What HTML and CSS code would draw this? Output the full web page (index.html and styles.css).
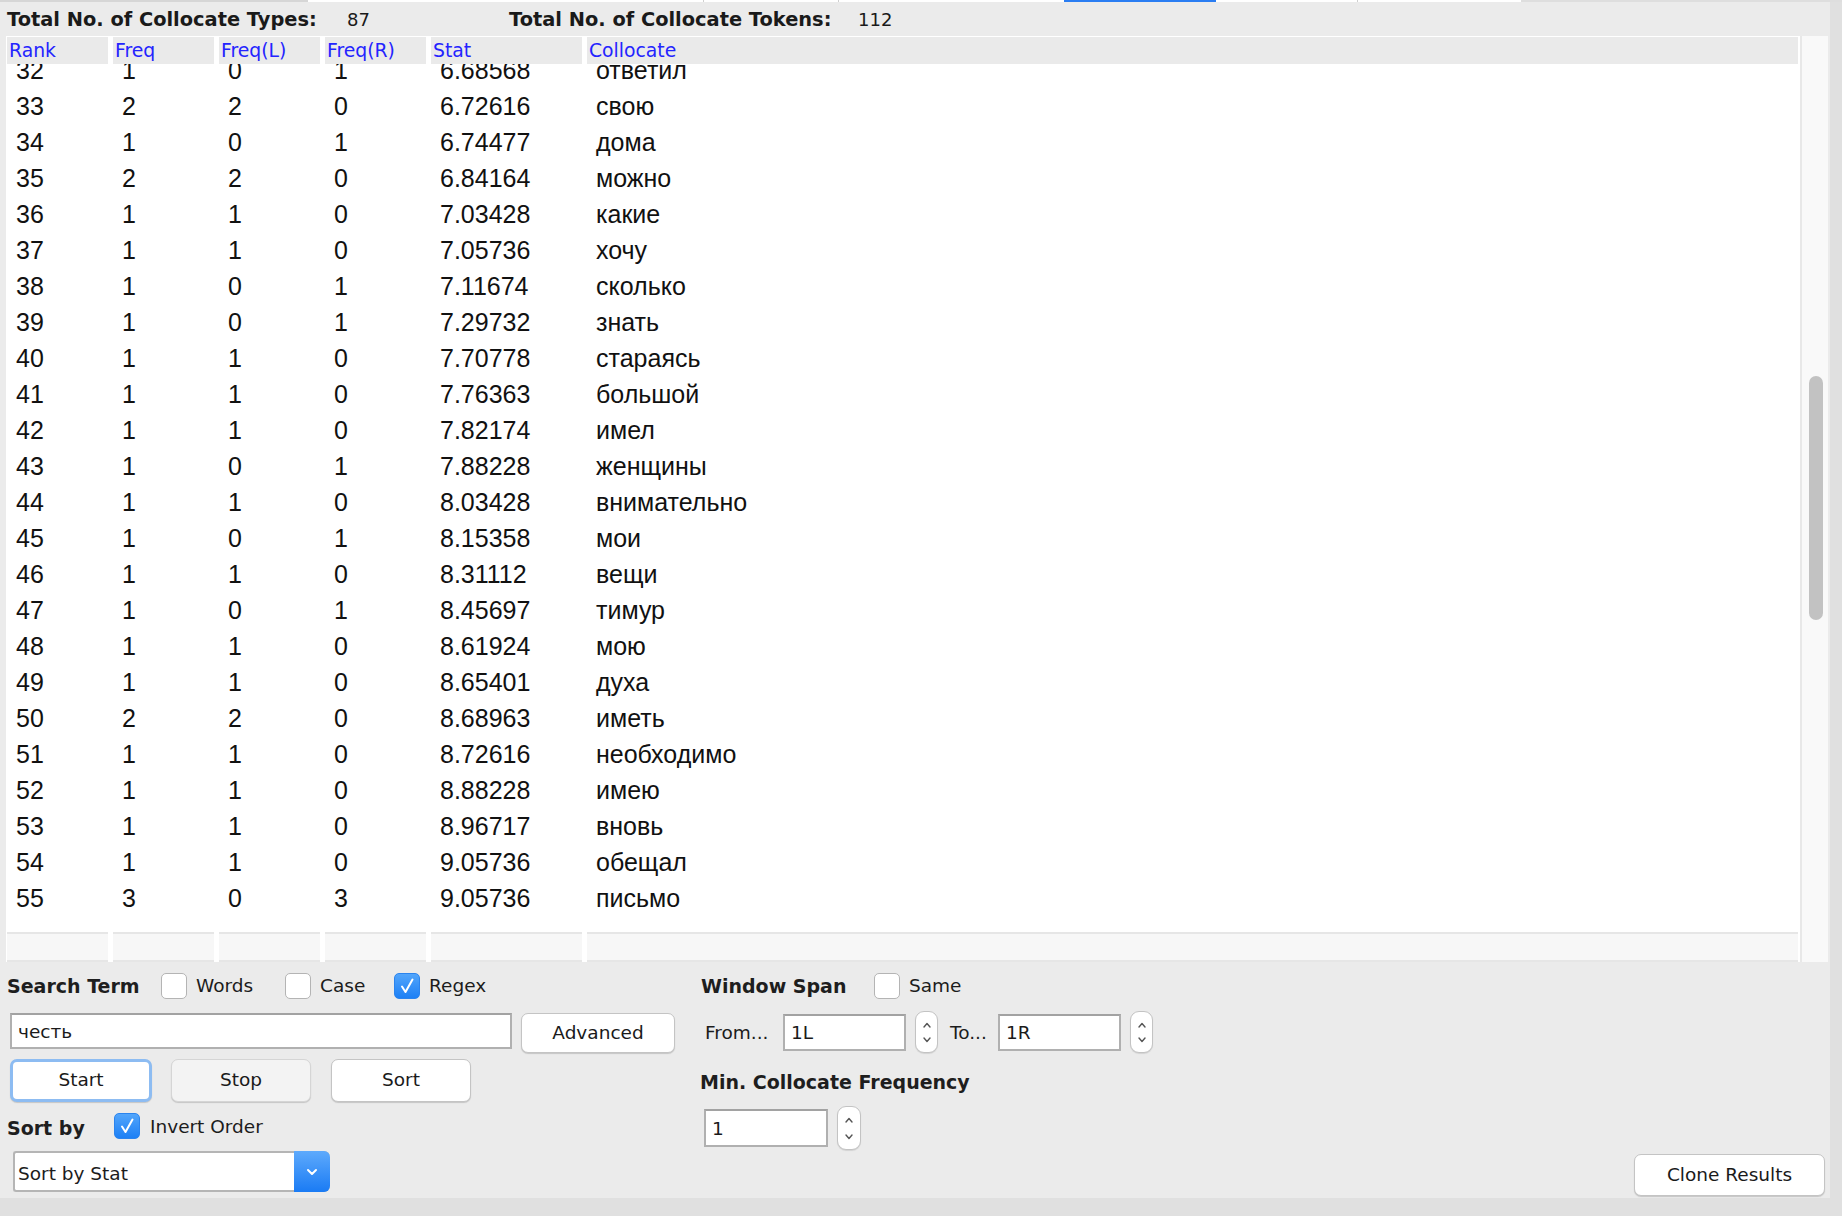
FILE: index.html
```html
<!DOCTYPE html>
<html>
<head>
<meta charset="utf-8">
<title>Collocates</title>
<link rel="stylesheet" href="styles.css">
</head>
<body>
<div class="tabstrip">
  <span class="ts ts-grey1"></span>
  <span class="ts ts-white1"></span>
  <span class="ts ts-sep"></span>
  <span class="ts ts-white2"></span>
  <span class="ts ts-sep"></span>
  <span class="ts ts-white3"></span>
  <span class="ts ts-blue"></span>
  <span class="ts ts-white4"></span>
  <span class="ts ts-sep"></span>
  <span class="ts ts-white5"></span>
  <span class="ts ts-grey2"></span>
</div>
<div class="window">
  <div class="main">
    <div class="totals">
      <span class="tot-label tl1">Total No. of Collocate Types:</span>
      <span class="tot-val tv1">87</span>
      <span class="tot-label tl2">Total No. of Collocate Tokens:</span>
      <span class="tot-val">112</span>
    </div>

    <div class="tablepane">
      <div class="table">
        <div class="thead">
          <div class="th">Rank</div>
          <div class="th">Freq</div>
          <div class="th">Freq(L)</div>
          <div class="th">Freq(R)</div>
          <div class="th">Stat</div>
          <div class="th">Collocate</div>
        </div>
        <div class="viewport">
          <div class="rows">
            <div class="row"><span>32</span><span>1</span><span>0</span><span>1</span><span>6.68568</span><span>ответил</span></div>
            <div class="row"><span>33</span><span>2</span><span>2</span><span>0</span><span>6.72616</span><span>свою</span></div>
            <div class="row"><span>34</span><span>1</span><span>0</span><span>1</span><span>6.74477</span><span>дома</span></div>
            <div class="row"><span>35</span><span>2</span><span>2</span><span>0</span><span>6.84164</span><span>можно</span></div>
            <div class="row"><span>36</span><span>1</span><span>1</span><span>0</span><span>7.03428</span><span>какие</span></div>
            <div class="row"><span>37</span><span>1</span><span>1</span><span>0</span><span>7.05736</span><span>хочу</span></div>
            <div class="row"><span>38</span><span>1</span><span>0</span><span>1</span><span>7.11674</span><span>сколько</span></div>
            <div class="row"><span>39</span><span>1</span><span>0</span><span>1</span><span>7.29732</span><span>знать</span></div>
            <div class="row"><span>40</span><span>1</span><span>1</span><span>0</span><span>7.70778</span><span>стараясь</span></div>
            <div class="row"><span>41</span><span>1</span><span>1</span><span>0</span><span>7.76363</span><span>большой</span></div>
            <div class="row"><span>42</span><span>1</span><span>1</span><span>0</span><span>7.82174</span><span>имел</span></div>
            <div class="row"><span>43</span><span>1</span><span>0</span><span>1</span><span>7.88228</span><span>женщины</span></div>
            <div class="row"><span>44</span><span>1</span><span>1</span><span>0</span><span>8.03428</span><span>внимательно</span></div>
            <div class="row"><span>45</span><span>1</span><span>0</span><span>1</span><span>8.15358</span><span>мои</span></div>
            <div class="row"><span>46</span><span>1</span><span>1</span><span>0</span><span>8.31112</span><span>вещи</span></div>
            <div class="row"><span>47</span><span>1</span><span>0</span><span>1</span><span>8.45697</span><span>тимур</span></div>
            <div class="row"><span>48</span><span>1</span><span>1</span><span>0</span><span>8.61924</span><span>мою</span></div>
            <div class="row"><span>49</span><span>1</span><span>1</span><span>0</span><span>8.65401</span><span>духа</span></div>
            <div class="row"><span>50</span><span>2</span><span>2</span><span>0</span><span>8.68963</span><span>иметь</span></div>
            <div class="row"><span>51</span><span>1</span><span>1</span><span>0</span><span>8.72616</span><span>необходимо</span></div>
            <div class="row"><span>52</span><span>1</span><span>1</span><span>0</span><span>8.88228</span><span>имею</span></div>
            <div class="row"><span>53</span><span>1</span><span>1</span><span>0</span><span>8.96717</span><span>вновь</span></div>
            <div class="row"><span>54</span><span>1</span><span>1</span><span>0</span><span>9.05736</span><span>обещал</span></div>
            <div class="row"><span>55</span><span>3</span><span>0</span><span>3</span><span>9.05736</span><span>письмо</span></div>
            <div class="row"><span>56</span><span>1</span><span>0</span><span>1</span><span>9.05736</span><span>прошу</span></div>
          </div>
        </div>
        <div class="gap"></div>
        <div class="tfoot">
          <div class="tf"></div><div class="tf"></div><div class="tf"></div><div class="tf"></div><div class="tf"></div><div class="tf"></div>
        </div>
      </div>
      <div class="vdivider"></div>
      <div class="scrolltrack"><div class="thumb"></div></div>
    </div>

    <div class="controls">
      <div class="col-left">
        <div class="r1">
          <span class="lbl-bold search-lbl">Search Term</span>
          <span class="check w-words"><span class="cb"></span><span>Words</span></span>
          <span class="check w-case"><span class="cb"></span><span>Case</span></span>
          <span class="check"><span class="cb on"><svg viewBox="0 0 26 26" width="26" height="26"><path d="M8 13.5 L11.5 19 L18.5 6.5" fill="none" stroke="#fff" stroke-width="2" stroke-linecap="round" stroke-linejoin="round"/></svg></span><span>Regex</span></span>
        </div>
        <div class="r2">
          <div class="field search-field">честь</div>
          <div class="btn adv-btn">Advanced</div>
        </div>
        <div class="r3">
          <div class="btn focus start-btn">Start</div>
          <div class="btn dim stop-btn">Stop</div>
          <div class="btn sort-btn">Sort</div>
        </div>
        <div class="r4">
          <span class="lbl-bold sortby-lbl">Sort by</span>
          <span class="check"><span class="cb on"><svg viewBox="0 0 26 26" width="26" height="26"><path d="M8 13.5 L11.5 19 L18.5 6.5" fill="none" stroke="#fff" stroke-width="2" stroke-linecap="round" stroke-linejoin="round"/></svg></span><span>Invert Order</span></span>
        </div>
        <div class="r5">
          <div class="combo">
            <span class="combo-text">Sort by Stat</span>
            <span class="combo-btn"><svg viewBox="0 0 14 10" width="14" height="10"><path d="M3 3 L7 7 L11 3" fill="none" stroke="#fff" stroke-width="2" stroke-linecap="round" stroke-linejoin="round"/></svg></span>
          </div>
        </div>
      </div>

      <div class="col-mid">
        <div class="m1">
          <span class="lbl-bold ws-lbl">Window Span</span>
          <span class="check"><span class="cb"></span><span>Same</span></span>
        </div>
        <div class="m2">
          <span class="from-lbl">From...</span>
          <div class="field span-field">1L</div>
          <div class="spin">
            <svg viewBox="0 0 10 6" width="10" height="6"><path d="M2 5 L5 1.5 L8 5" fill="none" stroke="#555" stroke-width="1.4" stroke-linecap="round" stroke-linejoin="round"/></svg>
            <svg viewBox="0 0 10 6" width="10" height="6"><path d="M2 1 L5 4.5 L8 1" fill="none" stroke="#555" stroke-width="1.4" stroke-linecap="round" stroke-linejoin="round"/></svg>
          </div>
          <span class="to-lbl">To...</span>
          <div class="field span-field">1R</div>
          <div class="spin">
            <svg viewBox="0 0 10 6" width="10" height="6"><path d="M2 5 L5 1.5 L8 5" fill="none" stroke="#555" stroke-width="1.4" stroke-linecap="round" stroke-linejoin="round"/></svg>
            <svg viewBox="0 0 10 6" width="10" height="6"><path d="M2 1 L5 4.5 L8 1" fill="none" stroke="#555" stroke-width="1.4" stroke-linecap="round" stroke-linejoin="round"/></svg>
          </div>
        </div>
        <div class="m3"><span class="lbl-bold">Min. Collocate Frequency</span></div>
        <div class="m4">
          <div class="field freq-field">1</div>
          <div class="spin spin-tall">
            <svg viewBox="0 0 10 6" width="10" height="6"><path d="M2 5 L5 1.5 L8 5" fill="none" stroke="#555" stroke-width="1.4" stroke-linecap="round" stroke-linejoin="round"/></svg>
            <svg viewBox="0 0 10 6" width="10" height="6"><path d="M2 1 L5 4.5 L8 1" fill="none" stroke="#555" stroke-width="1.4" stroke-linecap="round" stroke-linejoin="round"/></svg>
          </div>
        </div>
      </div>

      <div class="col-right">
        <div class="btn clone-btn">Clone Results</div>
      </div>
    </div>
  </div>
</div>
</body>
</html>
```
FILE: styles.css
```css
html, body {
  margin: 0;
  padding: 0;
}
body {
  width: 1842px;
  height: 1216px;
  overflow: hidden;
  background: #e0e0e0;
  font-family: "DejaVu Sans", "Noto Sans", sans-serif;
  color: #1c1c1c;
}

/* top tab remnant strip */
.tabstrip {
  display: flex;
  height: 2px;
}
.ts { display: block; height: 2px; }
.ts-grey1 { width: 308px; background: #d6d6d6; }
.ts-white1 { width: 395px; background: #fff; }
.ts-sep { width: 1px; background: #cfcfcf; }
.ts-white2 { width: 134px; background: #fff; }
.ts-white3 { width: 225px; background: #fff; }
.ts-blue { width: 152px; background: #2a7df2; }
.ts-white4 { width: 141px; background: #fff; }
.ts-white5 { width: 163px; background: #fff; }
.ts-grey2 { flex: 1; background: #dedede; }

.window {
  display: flex;
}
.main {
  width: 1830px;
  height: 1196px;
  background: #ebebeb;
  display: flex;
  flex-direction: column;
}

/* totals line */
.totals {
  height: 34px;
  display: flex;
  align-items: center;
  padding-left: 7px;
  font-size: 18px;
  color: #1a1a1a;
}
.tot-label {
  font-weight: bold;
  font-size: 19.4px;
}
.tl1 { width: 340px; }
.tv1 { width: 162px; }
.tl2 { width: 349px; }

/* table */
.tablepane {
  display: flex;
  margin-left: 6px;
  width: 1822px;
  height: 926px;
}
.table {
  width: 1794px;
  background: #fff;
  display: flex;
  flex-direction: column;
}
.thead, .row, .tfoot {
  display: grid;
  grid-template-columns: 106px 106px 106px 106px 156px 1fr;
  padding-left: 1px;
}
.thead {
  margin-top: 1px;
  height: 27px;
}
.th {
  background: #eaeaea;
  margin-right: 5px;
  color: #2424ff;
  font-size: 18.8px;
  line-height: 27px;
  padding-left: 2px;
}
.th:last-child { margin-right: 2px; }

.viewport {
  height: 860px;
  overflow: hidden;
}
.rows {
  margin-top: -12px;
}
.row {
  height: 36px;
  line-height: 36px;
  font-family: "Liberation Sans", Arial, sans-serif;
  font-size: 25px;
  color: #111;
}
.row span {
  padding-left: 9px;
  white-space: nowrap;
}
.gap { height: 8px; }
.tfoot { height: 30px; }
.tf {
  background: #f7f7f7;
  border-top: 2px solid #e6e6e6;
  border-bottom: 2px solid #e6e6e6;
  margin-right: 5px;
}
.tf:last-child { margin-right: 2px; }

.vdivider {
  width: 2px;
  background: #e8e8e8;
}
.scrolltrack {
  width: 26px;
  background: #f9f9f9;
}
.thumb {
  margin-top: 340px;
  margin-left: 7px;
  width: 14px;
  height: 244px;
  border-radius: 7px;
  background: #c2c2c2;
}

/* controls */
.controls {
  display: flex;
  height: 236px;
  font-size: 18.5px;
}
.col-left {
  width: 693px;
  padding-left: 7px;
  display: flex;
  flex-direction: column;
}
.col-mid {
  width: 560px;
  display: flex;
  flex-direction: column;
}
.col-right {
  flex: 1;
  display: flex;
  align-items: flex-end;
  justify-content: flex-end;
  padding: 0 5px 2px 0;
}

.lbl-bold {
  font-weight: bold;
  font-size: 19px;
  color: #1e1e1e;
  white-space: nowrap;
}
.check {
  display: flex;
  align-items: center;
  gap: 9px;
  white-space: nowrap;
}
.cb {
  display: block;
  width: 26px;
  height: 26px;
  box-sizing: border-box;
  border: 1px solid #b4b4b4;
  border-radius: 5px;
  background: #fff;
}
.cb svg { display: block; margin: -1px; }
.cb.on {
  background: linear-gradient(#52a5fb, #1d80f5);
  border-color: #2b84ee;
}

.r1 {
  margin-top: 10px;
  height: 27px;
  display: flex;
  align-items: center;
}
.search-lbl { width: 154px; }
.w-words { width: 124px; }
.w-case { width: 109px; }

.r2 {
  margin-top: 14px;
  height: 40px;
  display: flex;
  align-items: flex-start;
}
.field {
  box-sizing: border-box;
  background: #fff;
  border: 2px solid #b0b0b0;
  border-top-color: #a2a2a2;
  display: flex;
  align-items: center;
  padding-left: 6px;
  font-size: 18.5px;
  color: #1a1a1a;
}
.search-field {
  margin-left: 3px;
  width: 502px;
  height: 36px;
}
.btn {
  box-sizing: border-box;
  background: #fff;
  border: 1px solid #c4c4c4;
  border-radius: 7px;
  box-shadow: 0 1px 1px rgba(0, 0, 0, 0.16);
  display: flex;
  align-items: center;
  justify-content: center;
  color: #1a1a1a;
  font-size: 18.5px;
  padding-bottom: 2px;
}
.btn.focus {
  border: 3px solid #8dbcf2;
}
.btn.dim {
  background: #f3f3f3;
  border-color: #d5d5d5;
}
.adv-btn {
  margin-left: 9px;
  width: 154px;
  height: 40px;
}

.r3 {
  margin-top: 6px;
  height: 43px;
  display: flex;
}
.start-btn { margin-left: 3px; width: 142px; height: 43px; }
.stop-btn { margin-left: 19px; width: 140px; height: 43px; }
.sort-btn { margin-left: 20px; width: 140px; height: 43px; }

.r4 {
  margin-top: 10px;
  height: 28px;
  display: flex;
  align-items: center;
}
.sortby-lbl { width: 107px; padding-top: 3px; }
.r4 .check { gap: 10px; }

.r5 {
  margin-top: 11px;
  height: 41px;
  display: flex;
}
.combo {
  margin-left: 6px;
  width: 317px;
  height: 41px;
  box-sizing: border-box;
  border: 2px solid #b5b5b5;
  border-right: none;
  border-radius: 3px 6px 6px 3px;
  background: #fff;
  display: flex;
  align-items: center;
}
.combo-text {
  flex: 1;
  padding-left: 3px;
  padding-top: 3px;
  font-size: 18.5px;
}
.combo-btn {
  width: 36px;
  height: 41px;
  margin: -2px 0;
  border-radius: 0 6px 6px 0;
  background: linear-gradient(#5eaafc, #1a7bf4);
  display: flex;
  align-items: center;
  justify-content: center;
}

/* middle column */
.m1 {
  margin-top: 10px;
  height: 27px;
  display: flex;
  align-items: center;
}
.ws-lbl { margin-left: 1px; width: 173px; }
.m2 {
  margin-top: 11px;
  height: 44px;
  display: flex;
  align-items: center;
}
.from-lbl { margin-left: 5px; width: 78px; }
.span-field { width: 123px; height: 37px; }
.spin {
  box-sizing: border-box;
  width: 23px;
  height: 42px;
  margin-left: 9px;
  border: 1px solid #c3c3c3;
  border-radius: 9px;
  background: #fff;
  box-shadow: 0 1px 1px rgba(0, 0, 0, 0.1);
  display: flex;
  flex-direction: column;
  align-items: center;
  justify-content: center;
  gap: 9px;
}
.spin svg { display: block; }
.to-lbl { margin-left: 12px; width: 48px; }
.m3 {
  margin-top: 17px;
  height: 22px;
  display: flex;
  align-items: center;
}
.m4 {
  margin-top: 12px;
  height: 46px;
  display: flex;
  align-items: center;
}
.freq-field { margin-left: 4px; width: 124px; height: 38px; }
.spin-tall { width: 24px; height: 44px; gap: 11px; }

.clone-btn {
  width: 191px;
  height: 42px;
}
```
